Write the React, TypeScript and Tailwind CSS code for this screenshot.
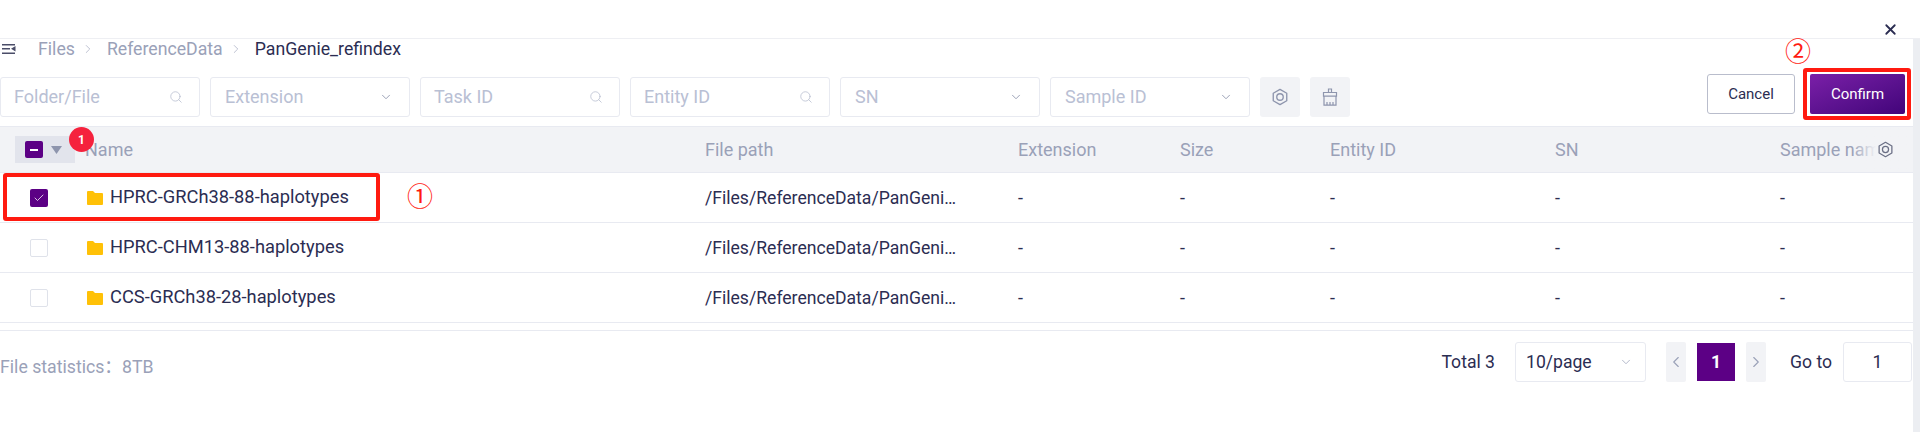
import { ChevronDown, ChevronLeft, ChevronRight, Search, X, Check } from 'lucide-react'

const font = { fontFamily: '"Roboto", "Noto Sans CJK SC", sans-serif' }
const cols = 'grid grid-cols-[705px_313px_162px_150px_225px_225px_1fr]'

function Hex({ size = 18, color = '#8e95ad' }: { size?: number; color?: string }) {
  return (
    <svg width={size} height={size} viewBox="0 0 20 20" fill="none" stroke={color} strokeWidth="1.5">
      <path d="M10 1.5 17.5 5.8v8.4L10 18.5l-7.5-4.3V5.8z" strokeLinejoin="round" />
      <circle cx="10" cy="10" r="3.6" />
    </svg>
  )
}

function Brush() {
  return (
    <svg width="16" height="18" viewBox="0 0 16 18" fill="none" stroke="#8e95ad" strokeWidth="1.2">
      <path d="M6.5 4.5V1h3v3.5" />
      <path d="M1.5 4.5h13v3.6h-13z" />
      <path d="M2 8.1v9h12v-9" />
      <path d="M5 17v-3M8 17v-3M11 17v-3" />
    </svg>
  )
}

function Folder() {
  return (
    <svg width="16" height="14" viewBox="0 0 16 14" className="shrink-0">
      <path d="M0 1a1 1 0 0 1 1-1h5l2 2h7a1 1 0 0 1 1 1v10a1 1 0 0 1-1 1H1a1 1 0 0 1-1-1z" fill="#ffc107" />
    </svg>
  )
}

function Filter({ label, kind }: { label: string; kind: 'search' | 'select' }) {
  return (
    <div className={`flex h-10 w-[200px] items-center justify-between rounded-[3px] border border-[#e8eaf1] pr-4 text-[#b9c0d4] ${kind === 'search' ? 'pl-[13px]' : 'pl-[14px]'}`}>
      <span>{label}</span>
      {kind === 'search' ? (
        <Search size={14} strokeWidth={1.3} className="text-[#b5bbce]" />
      ) : (
        <ChevronDown size={14} strokeWidth={1.5} className="text-[#8e95ad]" />
      )}
    </div>
  )
}

function Row({ name, checked }: { name: string; checked?: boolean }) {
  return (
    <div className={`${cols} h-[50px] items-center border-b border-[#e8eaf1] text-[#2b2d52]`}>
      <div className="flex items-center pl-[30px]">
        {checked ? (
          <div className="flex h-[18px] w-[18px] items-center justify-center rounded-[2px] bg-[#5c0085]">
            <Check size={12} strokeWidth={1.5} className="text-white" />
          </div>
        ) : (
          <div className="h-[18px] w-[18px] rounded-[2px] border border-[#dfe2ea] bg-white" />
        )}
        <div className="ml-[39px] flex items-center gap-[7px]">
          <Folder />
          <span className="mb-[2px] text-[18.3px]">{name}</span>
        </div>
      </div>
      <div className="text-[17.6px]">/Files/ReferenceData/PanGeni…</div>
      <div>-</div>
      <div>-</div>
      <div>-</div>
      <div>-</div>
      <div>-</div>
    </div>
  )
}

export default function App() {
  return (
    <div style={font} className="relative flex h-[432px] w-[1920px] flex-col overflow-hidden bg-white text-[18px] leading-6">
      <div className="flex h-[39px] shrink-0 items-center justify-end border-b border-[#eeeff3] pr-[21px]">
        <X size={17} strokeWidth={2.5} className="mt-[20px] text-[#2b2d52]" />
      </div>

      <div className="flex min-h-0 flex-1">
        <div className="w-[1913px]">
          <div className="flex h-[20px] items-center text-[17.7px]">
            <svg width="14" height="12" viewBox="0 0 14 12" className="ml-[2px]" fill="#4a4d68">
              <path d="M0 1h13v1.4H0zM0 5h8v1.4H0zM0 9.6h13V11H0zM9 5.7 13.5 3v5.4z" />
            </svg>
            <span className="ml-[22px] text-[#9aa1b8]">Files</span>
            <ChevronRight size={14} strokeWidth={1.3} className="ml-[6px] text-[#a9afc3]" />
            <span className="ml-[12px] text-[#9aa1b8]">ReferenceData</span>
            <ChevronRight size={14} strokeWidth={1.3} className="ml-[6px] text-[#a9afc3]" />
            <span className="ml-[12px] text-[#2b2d52]">PanGenie_refindex</span>
          </div>

          <div className="mt-[15px] flex h-[53px] items-start border-b border-[#e8eaf1]">
            <div className="mt-[3px] flex items-center gap-[10px]">
              <Filter label="Folder/File" kind="search" />
              <Filter label="Extension" kind="select" />
              <Filter label="Task ID" kind="search" />
              <Filter label="Entity ID" kind="search" />
              <Filter label="SN" kind="select" />
              <Filter label="Sample ID" kind="select" />
              <div className="flex h-10 w-10 items-center justify-center rounded-[3px] bg-[#f2f3f6]">
                <Hex />
              </div>
              <div className="flex h-10 w-10 items-center justify-center rounded-[3px] bg-[#f2f3f6]">
                <Brush />
              </div>
            </div>
            <div className="ml-auto flex items-center gap-[15px] pr-[8px]">
              <button className="h-10 w-[88px] rounded-[3px] border border-[#b9bdcc] text-[15px] text-[#2b2d52]">Cancel</button>
              <button className="h-10 w-[95px] rounded-[2px] bg-gradient-to-br from-[#7b1fa8] to-[#42047a] text-[15px] text-white">Confirm</button>
            </div>
          </div>

          <div className={`${cols} h-[46px] items-center border-b border-[#e8eaf1] bg-[#f2f3f6] text-[#9aa1b8]`}>
            <div className="flex items-center pl-[15px]">
              <div className="flex h-[27px] w-[60px] items-center gap-[8px] bg-[#e2e4ec] pl-[10px]">
                <div className="flex h-[17px] w-[18px] items-center justify-center rounded-[2px] bg-[#5c0085]">
                  <div className="h-[2px] w-[8px] bg-white" />
                </div>
                <svg width="11" height="8" viewBox="0 0 11 8">
                  <path d="M0 0h11L5.5 8z" fill="#8e95ad" />
                </svg>
              </div>
              <span className="ml-[10px]">Name</span>
            </div>
            <div>File path</div>
            <div>Extension</div>
            <div>Size</div>
            <div>Entity ID</div>
            <div>SN</div>
            <div className="relative h-full">
              <div className="flex h-full w-[96px] items-center overflow-hidden whitespace-nowrap">Sample name</div>
              <div className="absolute left-[72px] top-0 flex h-full w-[61px] items-center justify-end bg-gradient-to-r from-transparent to-[#f2f3f6] to-40% pr-[19px]">
                <Hex size={17} color="#6b7086" />
              </div>
            </div>
          </div>

          <Row name="HPRC-GRCh38-88-haplotypes" checked />
          <Row name="HPRC-CHM13-88-haplotypes" />
          <Row name="CCS-GRCh38-28-haplotypes" />

          <div className="mt-[7px] flex items-start border-t border-[#e8eaf1] pt-[11px]">
            <span className="mt-[13px] text-[17.7px] text-[#9aa1b8]">File statistics：8TB</span>
            <div className="ml-auto flex items-center text-[17.6px] text-[#2b2d52]">
              <span>Total 3</span>
              <div className="ml-[20px] flex h-10 w-[131px] items-center justify-between rounded-[3px] border border-[#e8eaf1] pl-[10px] pr-[12px]">
                <span>10/page</span>
                <ChevronDown size={14} strokeWidth={1.5} className="text-[#a9afc3]" />
              </div>
              <div className="ml-[20px] flex h-10 w-5 items-center justify-center rounded-[2px] bg-[#f2f3f6]">
                <ChevronLeft size={18} strokeWidth={1.5} className="text-[#9aa1b8]" />
              </div>
              <div className="ml-[11px] flex h-[38px] w-[38px] items-center justify-center bg-[#5c0085] font-bold text-white">1</div>
              <div className="ml-[11px] flex h-10 w-5 items-center justify-center rounded-[2px] bg-[#f2f3f6]">
                <ChevronRight size={18} strokeWidth={1.5} className="text-[#9aa1b8]" />
              </div>
              <span className="ml-[24px]">Go to</span>
              <div className="ml-[11px] mr-px flex h-10 w-[69px] items-center justify-center rounded-[3px] border border-[#e8eaf1]">1</div>
            </div>
          </div>
        </div>
        <div className="w-[7px] bg-[#eceef2]" />
      </div>

      {/* annotations over the screenshot */}
      <div className="absolute left-[3px] top-[173px] h-[48px] w-[377px] rounded-[3px] border-[4px] border-[#ff1a10]" />
      <div className="absolute left-[1803px] top-[68px] h-[52px] w-[108px] rounded-[3px] border-[4px] border-[#ff1a10]" />
      <div className="absolute left-[69px] top-[127px] flex h-[25px] w-[25px] items-center justify-center rounded-full bg-[#f5223d] text-xs font-bold text-white">1</div>
      <div className="absolute left-[405px] top-[182px] flex h-[30px] w-[30px] items-center justify-center text-[26px] leading-none text-[#ff1a10]">①</div>
      <div className="absolute left-[1783px] top-[37px] flex h-[30px] w-[30px] items-center justify-center text-[26px] leading-none text-[#ff1a10]">②</div>
    </div>
  )
}
